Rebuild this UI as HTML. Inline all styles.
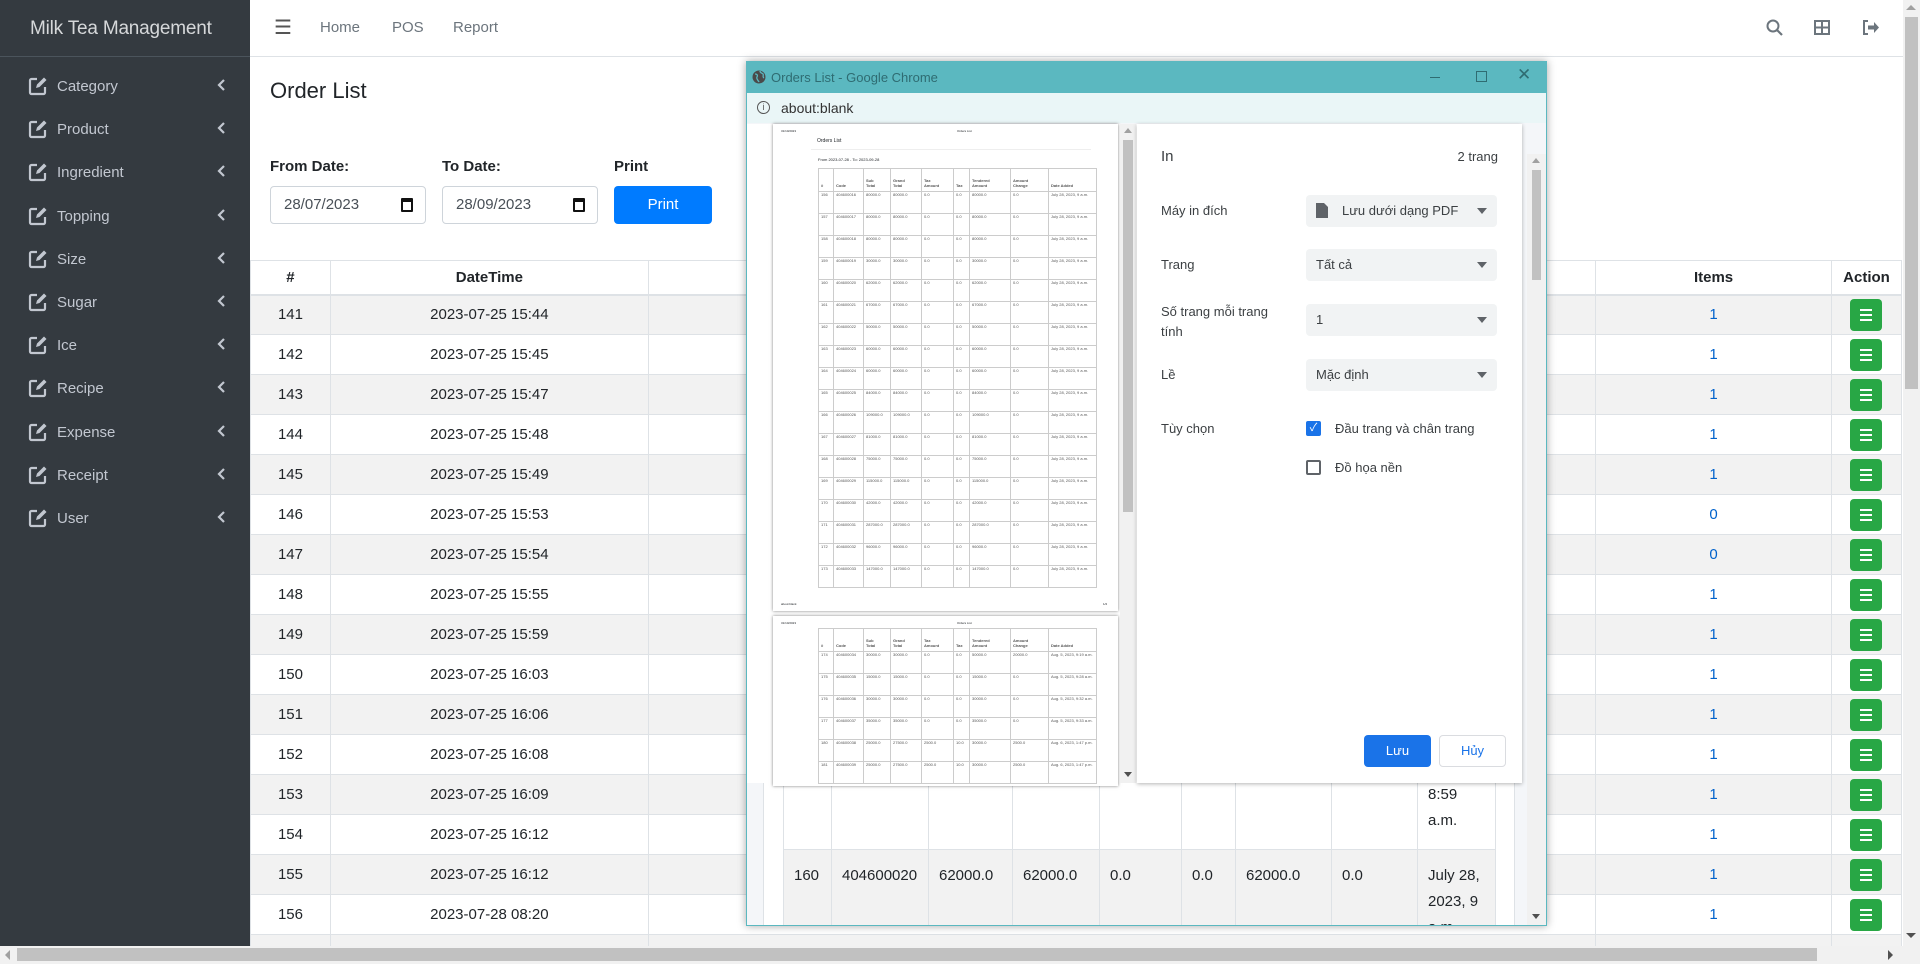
<!DOCTYPE html>
<html><head><meta charset="utf-8"><style>
*{box-sizing:border-box;margin:0;padding:0}
html,body{width:1920px;height:964px;overflow:hidden}
body{font-family:"Liberation Sans","Noto Sans CJK SC",sans-serif;color:#212529;background:#fff;position:relative;font-size:15px}
.abs{position:absolute}
#side{left:0;top:0;width:250px;height:946px;background:#343a40;color:#c2c7d0}
#side .brand{height:57px;border-bottom:1px solid #4b545c;color:#d6d8da;font-size:19px;padding:18px 0 0 30px;letter-spacing:-0.2px}
.mi{position:absolute;left:28px;font-size:15px;color:#c2c7d0}
.mi svg{position:absolute;left:0;top:-2px}
.mi span{position:absolute;left:29px;top:0;white-space:nowrap}
.mi i{position:absolute;left:188px;top:2px;font-style:normal}
#top{left:250px;top:0;width:1653px;height:57px;border-bottom:1px solid #dee2e6;background:#fff}
.nav{position:absolute;top:19px;color:#6c757d;font-size:15px}
h1{font-weight:400;font-size:22px;position:absolute;left:270px;top:78px}
.lbl{position:absolute;top:158px;font-weight:700;font-size:15px}
.inp{position:absolute;top:186px;width:156px;height:38px;border:1px solid #ced4da;border-radius:4px;padding:9px 0 0 13px;font-size:15px;color:#495057}
.inp b{position:absolute;right:12px;top:11px;width:12px;height:14px;border:2px solid #111;border-top-width:4px;border-radius:1px}
.btn{position:absolute;left:614px;top:186px;width:98px;height:38px;background:#007bff;color:#fff;border-radius:4px;text-align:center;padding-top:10px;font-size:15px}
table.main{position:absolute;left:250px;top:260px;border-collapse:collapse;width:1652px;font-size:15px}
table.main td,table.main th{border:1px solid #dee2e6;text-align:center;height:40px;padding:0}
table.main th{height:34px;border-bottom:2px solid #dee2e6}
table.main tr.g td{background:#f2f2f2}
.gb{display:inline-block;width:32px;height:32px;background:#28a745;border-radius:4px;position:relative;vertical-align:middle}
.gb:before{content:"";position:absolute;left:10px;top:10px;width:12px;height:2px;background:#fff;box-shadow:0 5px 0 #fff,0 10px 0 #fff}
#vs{left:1903px;top:0;width:17px;height:946px;background:#f1f1f1}
#hs{left:0;top:946px;width:1920px;height:18px;background:#f1f1f1}
#win{left:746px;top:61px;width:801px;height:865px;background:#fff;border:1px solid #5bb8c0;box-shadow:0 0 8px rgba(0,0,0,.35);overflow:hidden}
#tb{left:0;top:0;width:801px;height:31px;background:#5bb8c0;color:#2c5e63}
#ab{left:0;top:31px;width:801px;height:30px;background:#eaf6f7;font-size:14px}
.pg{position:absolute;background:#fff;box-shadow:0 0 3px rgba(0,0,0,.5)}
table.mini{position:absolute;border-collapse:collapse;font-size:4px;color:#555}
table.mini td,table.mini th{border:1px solid #ccc;text-align:left;padding:0 2px;vertical-align:top}
table.mini th{font-weight:700;vertical-align:bottom;padding-bottom:3px}
#set{left:390px;top:62px;width:385px;height:659px;background:#fff;box-shadow:0 1px 4px rgba(0,0,0,.3);font-size:13px;color:#3c4043}
.sl{position:absolute;left:169px;width:191px;height:32px;background:#f1f3f4;border-radius:4px;padding:8px 0 0 10px}
.sl:after{content:"";position:absolute;right:10px;top:13px;border:5px solid transparent;border-top:6px solid #5f6368}
.sr{position:absolute;left:24px}
table.bg{position:absolute;border-collapse:collapse;font-size:15px}
table.bg td{border:1px solid #dee2e6;padding:0 10px;vertical-align:top}
</style></head><body>

<div id="side" class="abs">
<div class="brand">Milk Tea Management</div>
</div>
<div id="menu"></div>

<div id="top" class="abs">
<div class="nav" style="left:24px;top:15px;font-size:20px;color:#555">☰</div>
<div class="nav" style="left:70px">Home</div>
<div class="nav" style="left:142px">POS</div>
<div class="nav" style="left:203px">Report</div>
<svg class="abs" style="left:1516px;top:19px" width="18" height="18" viewBox="0 0 18 18"><circle cx="7" cy="7" r="5.5" fill="none" stroke="#6c757d" stroke-width="2"/><path d="M11 11l5 5" stroke="#6c757d" stroke-width="2.2"/></svg>
<svg class="abs" style="left:1564px;top:20px" width="16" height="15" viewBox="0 0 16 15"><rect x="1" y="1" width="14" height="13" fill="none" stroke="#6c757d" stroke-width="2"/><path d="M8 1v13M1 7.5h14" stroke="#6c757d" stroke-width="2"/></svg>
<svg class="abs" style="left:1612px;top:20px" width="18" height="15" viewBox="0 0 18 15"><path d="M6 1H2v13h4" fill="none" stroke="#6c757d" stroke-width="2"/><path d="M6 5.5h6V2l5 5.5-5 5.5V9.5H6z" fill="#6c757d"/></svg>
</div>

<h1>Order List</h1>
<div class="lbl" style="left:270px">From Date:</div>
<div class="lbl" style="left:442px">To Date:</div>
<div class="lbl" style="left:614px">Print</div>
<div class="inp" style="left:270px">28/07/2023<b></b></div>
<div class="inp" style="left:442px">28/09/2023<b></b></div>
<div class="btn">Print</div>

<div id="mtw"></div>

<div id="vs" class="abs"><div class="abs" style="left:3px;top:5px;border:5px solid transparent;border-bottom:5px solid #a0a0a0;border-top:0"></div><div class="abs" style="left:2px;top:17px;width:13px;height:372px;background:#c1c1c1"></div><div class="abs" style="left:3px;top:933px;border:5px solid transparent;border-top:5px solid #505050;border-bottom:0"></div></div>
<div id="hs" class="abs"><div class="abs" style="left:17px;top:2px;width:1800px;height:13px;background:#c1c1c1"></div><div class="abs" style="left:5px;top:4px;border:5px solid transparent;border-right:5px solid #a0a0a0;border-left:0"></div><div class="abs" style="left:1888px;top:4px;border:5px solid transparent;border-left:5px solid #505050;border-right:0"></div></div>

<div id="win" class="abs">
<div id="tb" class="abs">
<svg class="abs" style="left:5px;top:8px" width="14" height="14" viewBox="0 0 14 14"><circle cx="7" cy="7" r="6.5" fill="#4a4a4a"/><path d="M3 4c2 0 3 1 2 3s1 3 2 5M8 1c0 2 2 2 3 3s-1 3 1 4" stroke="#5bb8c0" stroke-width="1.3" fill="none"/></svg>
<div class="abs" style="left:24px;top:8px;font-size:13px;color:#2f6c72">Orders List - Google Chrome</div>
<div class="abs" style="left:683px;top:15px;width:10px;height:1px;background:#2f6c72"></div>
<div class="abs" style="left:729px;top:9px;width:11px;height:11px;border:1px solid #2f6c72"></div>
<div class="abs" style="left:770px;top:3px;font-size:17px;color:#2f6c72">✕</div>
</div>
<div id="ab" class="abs"><div class="abs" style="left:10px;top:8px;width:13px;height:13px;border:1.3px solid #555;border-radius:50%;font-size:9px;text-align:center;line-height:11px;color:#555">i</div><div class="abs" style="left:34px;top:7px;color:#333">about:blank</div></div>

<div class="abs" style="left:0;top:61px;width:801px;height:804px;background:#f4f6f9"></div>
<div class="abs" style="left:16px;top:90px;width:752px;height:780px;background:#fff;border:1px solid #dee2e6"></div>
<table class="bg" style="left:36px;top:700px">
<tr style="height:87px"><td style="width:48px"></td><td style="width:97px"></td><td style="width:84px"></td><td style="width:87px"></td><td style="width:82px"></td><td style="width:54px"></td><td style="width:96px"></td><td style="width:86px"></td><td style="width:78px;padding-top:19px;line-height:26px">8:59<br>a.m.</td></tr>
<tr style="height:90px;background:#f2f2f2"><td style="padding-top:13px;line-height:26px">160</td><td style="padding-top:13px;line-height:26px">404600020</td><td style="padding-top:13px;line-height:26px">62000.0</td><td style="padding-top:13px;line-height:26px">62000.0</td><td style="padding-top:13px;line-height:26px">0.0</td><td style="padding-top:13px;line-height:26px">0.0</td><td style="padding-top:13px;line-height:26px">62000.0</td><td style="padding-top:13px;line-height:26px">0.0</td><td style="padding-top:13px;line-height:26px">July 28, 2023, 9 a.m.</td></tr>
</table>
<div class="abs" style="left:780px;top:92px;width:20px;height:773px;background:#f1f1f1"><div class="abs" style="left:5px;top:4px;border:4px solid transparent;border-bottom:5px solid #a0a0a0;border-top:0"></div><div class="abs" style="left:5px;top:16px;width:9px;height:110px;background:#c1c1c1"></div><div class="abs" style="left:5px;top:760px;border:4px solid transparent;border-top:5px solid #505050;border-bottom:0"></div></div>

<div class="abs" style="left:0;top:62px;width:390px;height:659px;background:#fff"></div>
<div class="pg" style="left:26px;top:62px;width:345px;height:487px" id="p1">
<div class="abs" style="left:8px;top:5px;font-size:3px">31/10/2023</div>
<div class="abs" style="left:184px;top:5px;font-size:3px">Orders List</div>
<div class="abs" style="left:44px;top:14px;font-size:5px">Orders List</div>
<div class="abs" style="left:38px;top:25px;width:280px;height:1px;background:#eee"></div>
<div class="abs" style="left:45px;top:33px;font-size:4px">From 2023-07-28 - To: 2023-09-28</div>
<div class="abs" style="left:8px;top:478px;font-size:3px">about:blank</div>
<div class="abs" style="left:330px;top:478px;font-size:3px">1/2</div>
</div>
<div class="pg" style="left:26px;top:554px;width:345px;height:170px;overflow:hidden" id="p2">
<div class="abs" style="left:8px;top:5px;font-size:3px">31/10/2023</div>
<div class="abs" style="left:184px;top:5px;font-size:3px">Orders List</div>
</div>
<div class="abs" style="left:373px;top:62px;width:16px;height:659px;background:#f1f1f1"><div class="abs" style="left:4px;top:4px;border:4px solid transparent;border-bottom:5px solid #a0a0a0;border-top:0"></div><div class="abs" style="left:3px;top:16px;width:10px;height:372px;background:#c1c1c1"></div><div class="abs" style="left:4px;top:648px;border:4px solid transparent;border-top:5px solid #505050;border-bottom:0"></div></div>

<div id="set" class="abs">
<div class="sr" style="top:24px;font-size:15px">In</div>
<div class="abs" style="right:24px;top:25px;font-size:13px">2 trang</div>
<div class="sr" style="top:79px">Máy in đích</div>
<div class="sl" style="top:71px;padding-left:36px"><svg class="abs" style="left:10px;top:8px" width="12" height="15" viewBox="0 0 12 15"><path d="M0 0h8l4 4v11H0z" fill="#5f6368"/></svg>Lưu dưới dạng PDF</div>
<div class="sr" style="top:133px">Trang</div>
<div class="sl" style="top:125px">Tất cả</div>
<div class="sr" style="top:178px;line-height:20px">Số trang mỗi trang<br>tính</div>
<div class="sl" style="top:180px">1</div>
<div class="sr" style="top:243px">Lề</div>
<div class="sl" style="top:235px">Mặc định</div>
<div class="sr" style="top:297px">Tùy chọn</div>
<div class="abs" style="left:169px;top:297px;width:15px;height:15px;background:#1a73e8;border-radius:2px;color:#fff;font-size:11px;text-align:center;line-height:15px">✓</div>
<div class="abs" style="left:198px;top:297px">Đầu trang và chân trang</div>
<div class="abs" style="left:169px;top:336px;width:15px;height:15px;border:2px solid #5f6368;border-radius:2px"></div>
<div class="abs" style="left:198px;top:336px">Đồ họa nền</div>
<div class="abs" style="left:227px;top:611px;width:67px;height:32px;background:#1a73e8;border-radius:4px;color:#fff;text-align:center;line-height:32px">Lưu</div>
<div class="abs" style="left:302px;top:611px;width:67px;height:32px;border:1px solid #dadce0;border-radius:4px;color:#1a73e8;text-align:center;line-height:30px">Hủy</div>
</div>
</div>

<script>
var items=["Category","Product","Ingredient","Topping","Size","Sugar","Ice","Recipe","Expense","Receipt","User"];
var h="";
items.forEach(function(t,i){var y=78+i*43.2;
h+='<div class="mi" style="top:'+y+'px"><svg width="20" height="20" viewBox="0 0 20 20"><path d="M9 3H3.5A1.5 1.5 0 0 0 2 4.5v12A1.5 1.5 0 0 0 3.5 18h12a1.5 1.5 0 0 0 1.5-1.5V11" fill="none" stroke="#c2c7d0" stroke-width="2.2"/><path d="M8 12l1-3.5 7-7 2.5 2.5-7 7z" fill="#c2c7d0"/></svg><span>'+t+'</span><i><svg width="10" height="14" viewBox="0 0 10 14"><path d="M8 2L3 7l5 5" fill="none" stroke="#c2c7d0" stroke-width="2.2"/></svg></i></div>';});
document.getElementById("menu").innerHTML=h;
var times=["07-25 15:44","07-25 15:45","07-25 15:47","07-25 15:48","07-25 15:49","07-25 15:53","07-25 15:54","07-25 15:55","07-25 15:59","07-25 16:03","07-25 16:06","07-25 16:08","07-25 16:09","07-25 16:12","07-25 16:12","07-28 08:20"];
var it=[1,1,1,1,1,0,0,1,1,1,1,1,1,1,1,1];
var r='<table class="main"><colgroup><col style="width:80px"><col style="width:318px"><col style="width:948px"><col style="width:236px"><col style="width:70px"></colgroup><tr><th>#</th><th>DateTime</th><th></th><th>Items</th><th>Action</th></tr>';
times.forEach(function(t,i){r+='<tr'+(i%2==0?' class="g"':'')+'><td>'+(141+i)+'</td><td>2023-'+t+'</td><td></td><td style="color:#0062cc">'+it[i]+'</td><td><span class="gb"></span></td></tr>';});
r+='<tr class="g"><td style="height:12px"></td><td></td><td></td><td></td><td></td></tr></table>';
document.getElementById("mtw").innerHTML=r;
function mini(ids,codes,sub,grand,tax,taxp,tend,chg,dates,rowh,hh){
var w=[15,30,27,31,32,16,41,38,48];
var s='<table class="mini" style="left:45px;top:'+hh+'px"><tr style="height:23px">';
["#","Code","Sub<br>Total","Grand<br>Total","Tax<br>Amount","Tax","Tendered<br>Amount","Amount<br>Change","Date Added"].forEach(function(x,i){s+='<th style="width:'+w[i]+'px">'+x+'</th>'});
s+='</tr>';
ids.forEach(function(id,i){s+='<tr style="height:'+rowh+'px"><td>'+id+'</td><td>'+codes[i]+'</td><td>'+sub[i]+'</td><td>'+grand[i]+'</td><td>'+tax[i]+'</td><td>'+taxp[i]+'</td><td>'+tend[i]+'</td><td>'+chg[i]+'</td><td>'+dates[i]+'</td></tr>'});
return s+'</table>';}
var ids=[],c=[],su=[],g=[],tx=[],tp=[],te=[],ch=[],d=[];
var vals=[80000,80000,80000,30000,62000,67000,50000,60000,60000,84000,109000,81000,75000,115000,42000,287000,96000,147000];
var idl=[156,157,158,159,160,161,162,163,164,165,166,167,168,169,170,171,172,173];
idl.forEach(function(id,i){ids.push(id);c.push("4046000"+(16+i));su.push(vals[i]+".0");g.push(vals[i]+".0");tx.push("0.0");tp.push("0.0");te.push(vals[i]+".0");ch.push("0.0");d.push("July 28, 2023, 9 a.m.")});
document.getElementById("p1").innerHTML+=mini(ids,c,su,g,tx,tp,te,ch,d,22,44);
document.getElementById("p2").innerHTML+=mini([174,175,176,177,180,181],["404600034","404600035","404600036","404600037","404600038","404600039"],["30000.0","15000.0","30000.0","35000.0","25000.0","25000.0"],["30000.0","15000.0","30000.0","35000.0","27500.0","27500.0"],["0.0","0.0","0.0","0.0","2500.0","2500.0"],["0.0","0.0","0.0","0.0","10.0","10.0"],["50000.0","15000.0","30000.0","35000.0","30000.0","30000.0"],["20000.0","0.0","0.0","0.0","2500.0","2500.0"],["Aug. 5, 2023, 9:19 a.m.","Aug. 5, 2023, 9:28 a.m.","Aug. 5, 2023, 9:32 a.m.","Aug. 5, 2023, 9:33 a.m.","Aug. 6, 2023, 1:47 p.m.","Aug. 6, 2023, 1:47 p.m."],22,12);
</script>
</body></html>
